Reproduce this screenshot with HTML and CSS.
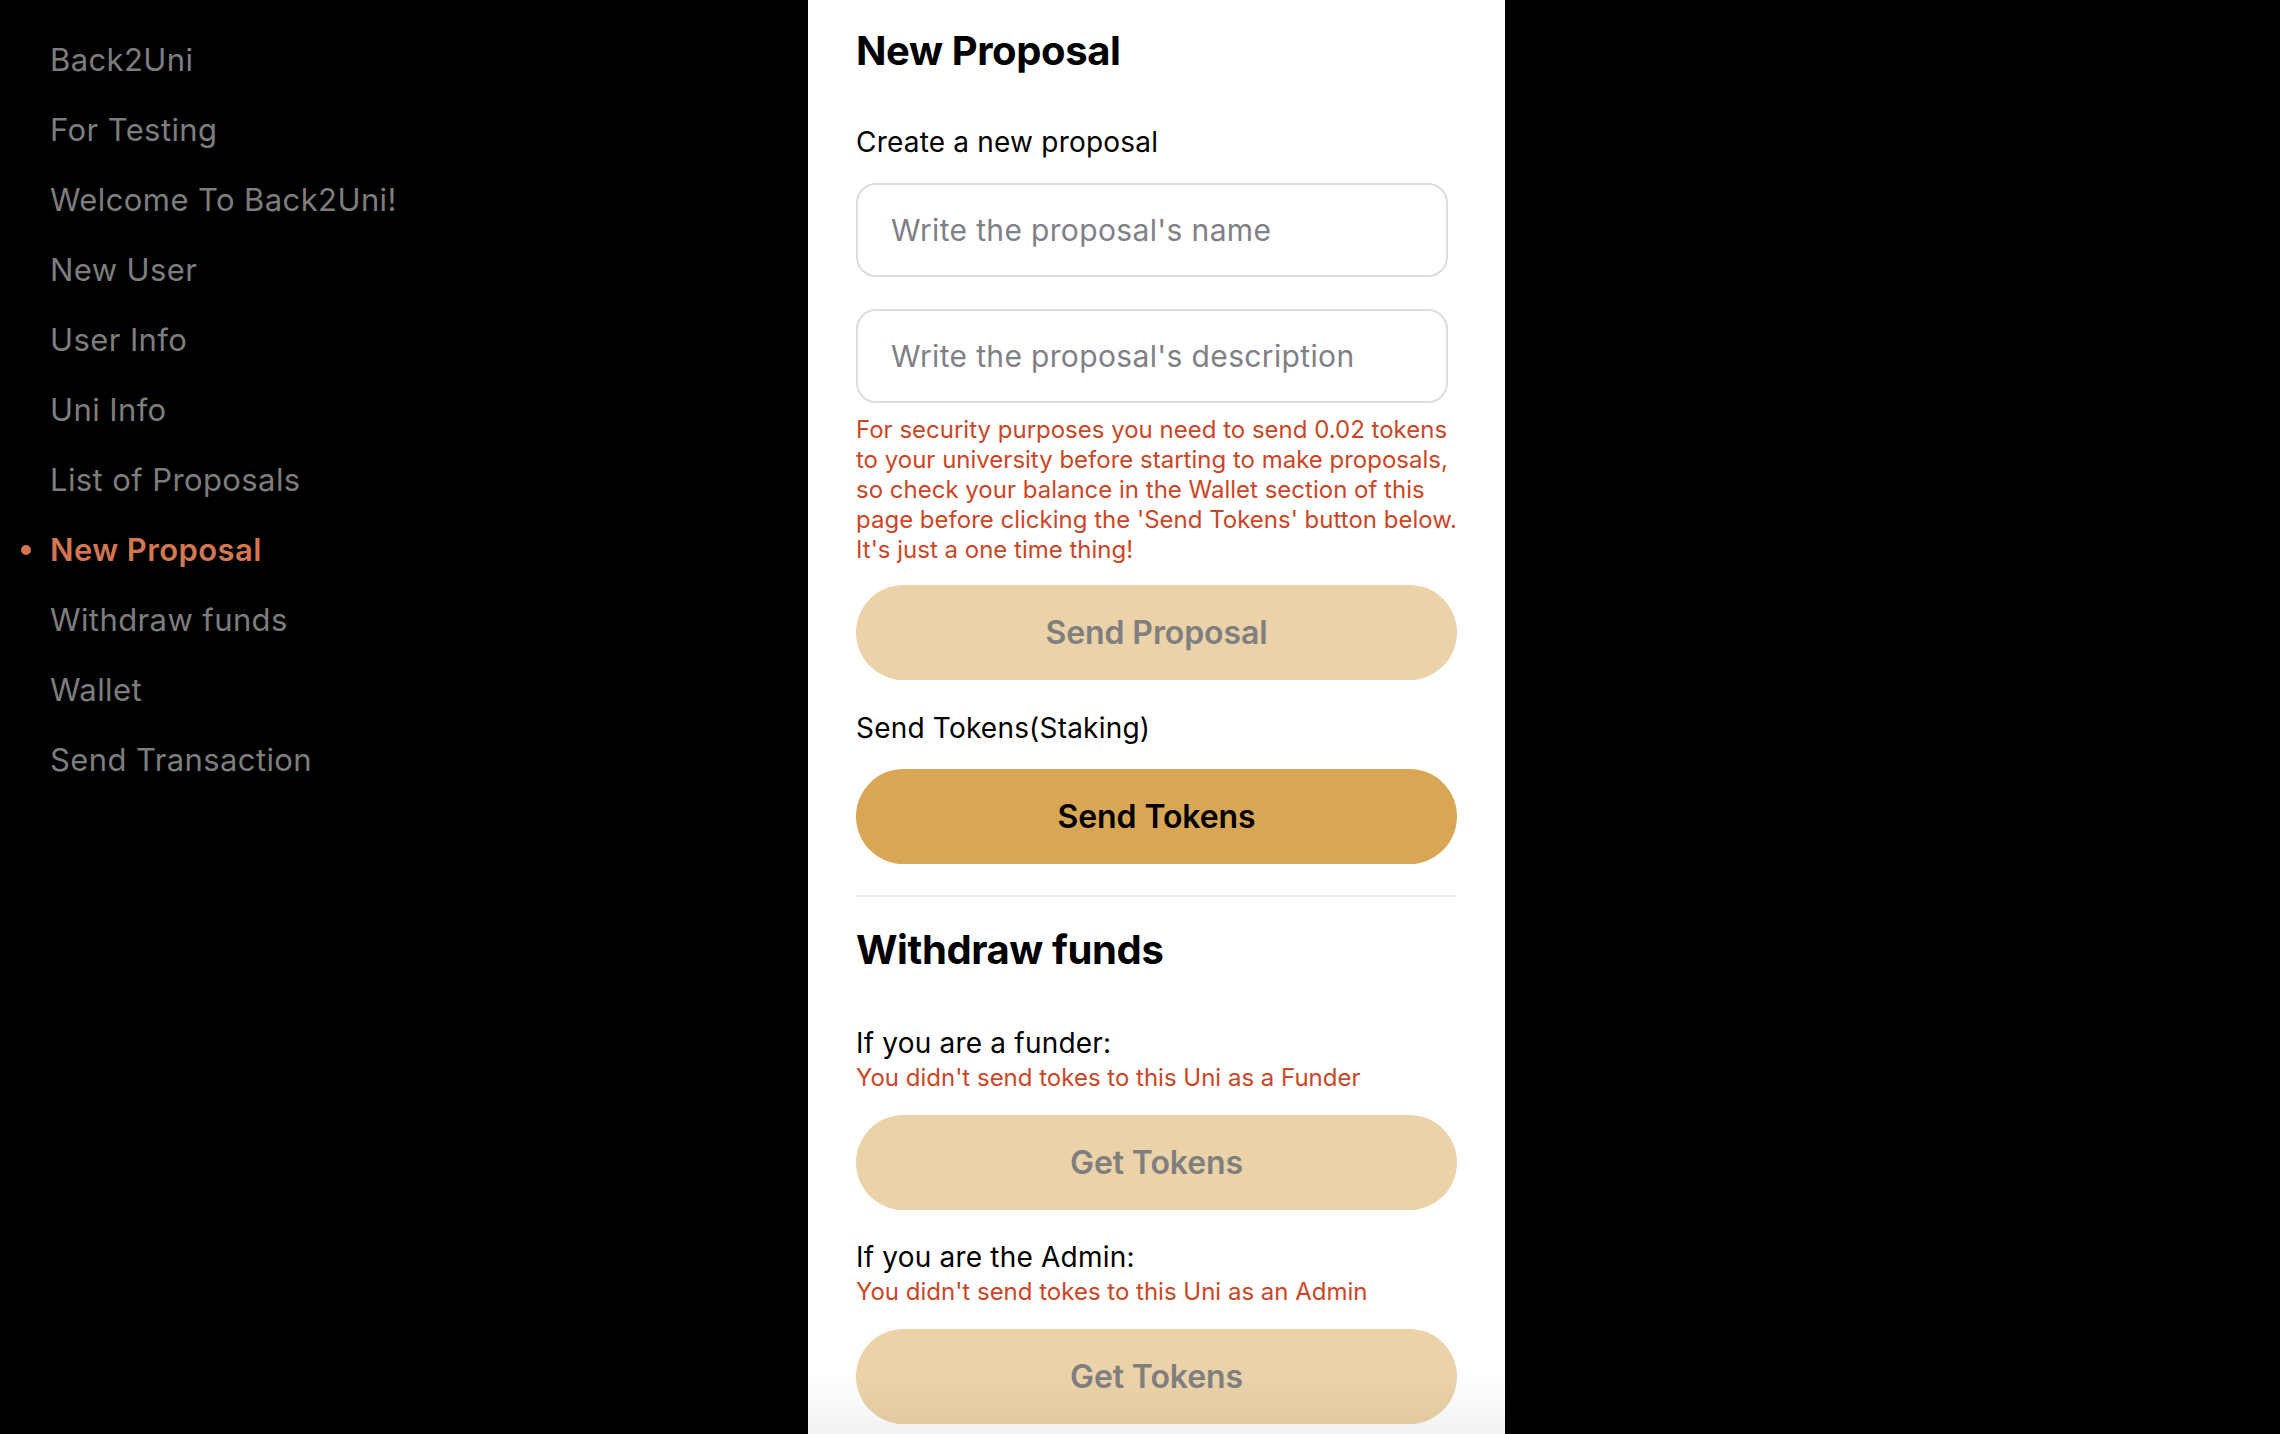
FILE: index.html
```html
<!DOCTYPE html>
<html lang="en">
<head>
<meta charset="utf-8">
<title>Back2Uni - New Proposal</title>
<link rel="stylesheet" href="styles.css">
</head>
<body>
<div class="layout">
  <nav class="sidebar">
    <ul class="nav-list">
      <li class="nav-item">Back2Uni</li>
      <li class="nav-item">For Testing</li>
      <li class="nav-item">Welcome To Back2Uni!</li>
      <li class="nav-item">New User</li>
      <li class="nav-item">User Info</li>
      <li class="nav-item">Uni Info</li>
      <li class="nav-item">List of Proposals</li>
      <li class="nav-item active">New Proposal</li>
      <li class="nav-item">Withdraw funds</li>
      <li class="nav-item">Wallet</li>
      <li class="nav-item">Send Transaction</li>
    </ul>
  </nav>
  <main class="panel">
    <section class="section">
      <h1 class="title">New Proposal</h1>
      <p class="label label-first">Create a new proposal</p>
      <input class="field" type="text" placeholder="Write the proposal's name">
      <input class="field field-second" type="text" placeholder="Write the proposal's description">
      <p class="warning">For security purposes you need to send 0.02 tokens to your university before starting to make proposals, so check your balance in the Wallet section of this page before clicking the 'Send Tokens' button below. It's just a one time thing!</p>
      <button class="btn btn-disabled btn-after-warning" type="button">Send Proposal</button>
      <p class="label label-mid">Send Tokens(Staking)</p>
      <button class="btn btn-primary" type="button">Send Tokens</button>
    </section>
    <hr class="divider">
    <section class="section">
      <h2 class="title title-second">Withdraw funds</h2>
      <p class="label label-funder">If you are a funder:</p>
      <p class="notice">You didn't send tokes to this Uni as a Funder</p>
      <button class="btn btn-disabled btn-after-notice" type="button">Get Tokens</button>
      <p class="label label-admin">If you are the Admin:</p>
      <p class="notice">You didn't send tokes to this Uni as an Admin</p>
      <button class="btn btn-disabled btn-after-notice" type="button">Get Tokens</button>
    </section>
    <div class="fade"></div>
  </main>
</div>
</body>
</html>
```

FILE: styles.css
```css
* {
  box-sizing: border-box;
}

html, body {
  margin: 0;
  padding: 0;
  height: 100%;
  background: #000;
  overflow: hidden;
}

body {
  font-family: Inter, "Noto Sans", "Liberation Sans", sans-serif;
}

.layout {
  display: flex;
  min-height: 100vh;
}

.sidebar {
  flex: 0 0 808px;
  padding-top: 25px;
}

.nav-list {
  list-style: none;
  margin: 0;
  padding: 0;
}

.nav-item {
  position: relative;
  height: 70px;
  line-height: 70px;
  padding-left: 50px;
  font-size: 31px;
  color: #7d7d7d;
  letter-spacing: 0.4px;
}

.nav-item.active {
  color: #d4764f;
  font-weight: 600;
}

.nav-item.active::before {
  content: "";
  position: absolute;
  left: 21px;
  top: 30px;
  width: 10px;
  height: 10px;
  border-radius: 50%;
  background: #d4764f;
}

.panel {
  position: relative;
  flex: 0 0 697px;
  width: 697px;
  min-width: 0;
  background: #fff;
  padding: 0 48px 0 48px;
  min-height: 100vh;
}

.section {
  display: flex;
  flex-direction: column;
  align-items: flex-start;
}

.title {
  margin: 27px 0 0;
  font-size: 40px;
  line-height: 48px;
  font-weight: 700;
  color: #000;
  letter-spacing: -0.4px;
}

.title-second {
  margin-top: 29px;
}

.label {
  margin: 0;
  font-size: 28px;
  line-height: 34px;
  color: #000;
  letter-spacing: 0.2px;
}

.label-first {
  margin-top: 50px;
}

.label-mid {
  margin-top: 31px;
}

.label-funder {
  margin-top: 52px;
}

.label-admin {
  margin-top: 30px;
}

.field {
  width: 592px;
  height: 94px;
  margin-top: 24px;
  padding: 0 33px;
  border: 2px solid #dcdce1;
  border-radius: 20px;
  background: #fff;
  font-family: inherit;
  font-size: 30px;
  color: #000;
  outline: none;
  letter-spacing: 0.35px;
}

.field::placeholder {
  color: #808086;
  letter-spacing: 0.35px;
}

.field-second {
  margin-top: 32px;
}

.warning {
  margin: 12px -9px 0 0;
  width: 610px;
  font-size: 24px;
  line-height: 30px;
  color: #cc4626;
  letter-spacing: 0;
}

.notice {
  margin: 3px 0 0;
  font-size: 24px;
  line-height: 30px;
  color: #cc4626;
  letter-spacing: 0;
}

.btn {
  width: 601px;
  height: 95px;
  border: none;
  border-radius: 48px;
  font-family: inherit;
  font-size: 32px;
  font-weight: 600;
  letter-spacing: -0.1px;
  cursor: pointer;
}

.btn-after-warning {
  margin-top: 20px;
}

.btn-after-notice {
  margin-top: 22px;
}

.btn-disabled {
  background: #ebd2a9;
  color: #7f7f7f;
}

.btn-primary {
  margin-top: 24px;
  background: #d8a654;
  color: #000;
}

.divider {
  margin: 31px 0 0;
  width: 601px;
  height: 2px;
  border: none;
  background: #ebebef;
}

.fade {
  position: absolute;
  left: 0;
  right: 0;
  bottom: 0;
  height: 60px;
  background: linear-gradient(rgba(0, 0, 0, 0), rgba(0, 0, 0, 0.05));
  pointer-events: none;
}
```
